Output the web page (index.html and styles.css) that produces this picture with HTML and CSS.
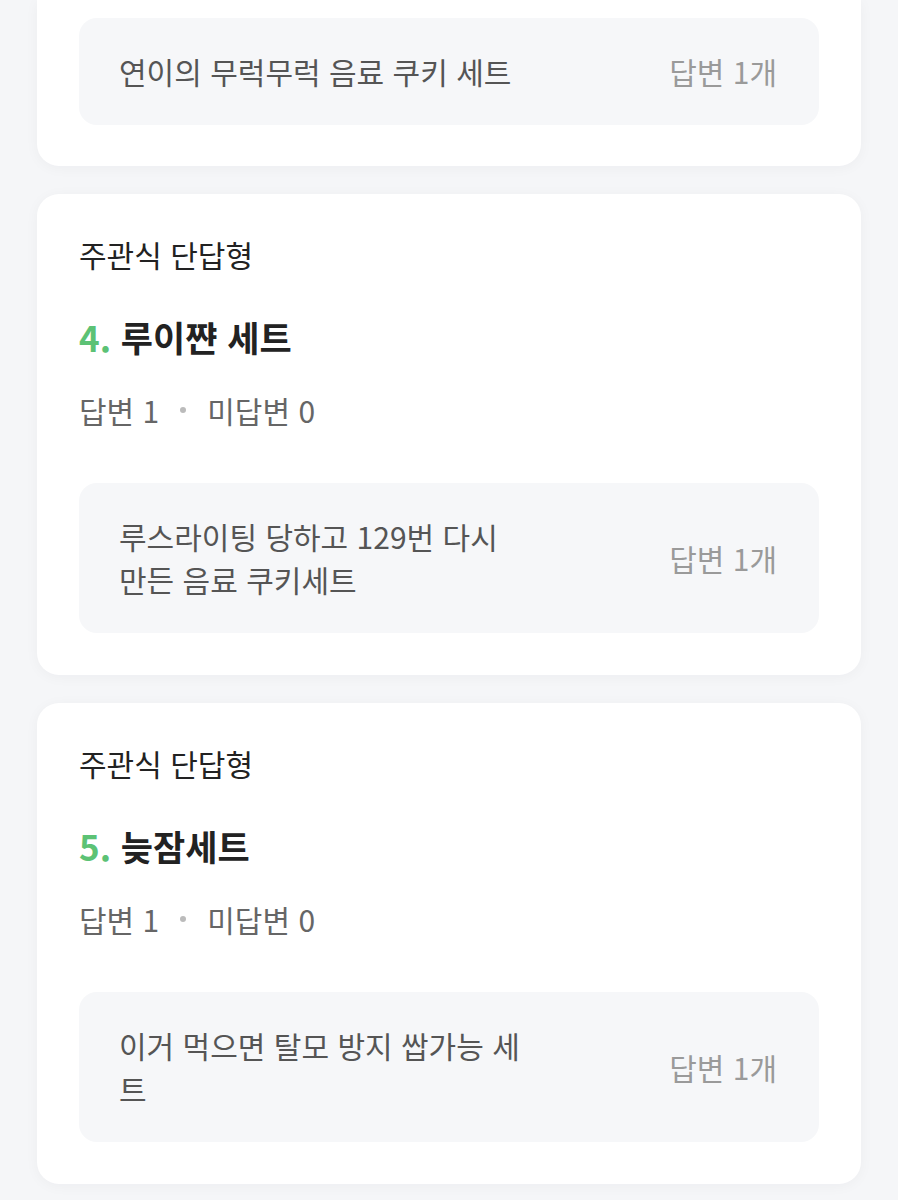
FILE: index.html
```html
<!DOCTYPE html>
<html lang="ko">
<head>
<meta charset="utf-8">
<link rel="stylesheet" href="styles.css">
</head>
<body>
<div class="page">
  <section class="card card-cut">
    <div class="answer">
      <p class="answer-text">연이의 무럭무럭 음료 쿠키 세트</p>
      <span class="answer-count">답변 1개</span>
    </div>
  </section>

  <section class="card">
    <div class="qtype">주관식 단답형</div>
    <h2 class="qtitle"><span class="qnum">4.</span> 루이쨘 세트</h2>
    <div class="stats"><span>답변 1</span><span class="dot"></span><span>미답변 0</span></div>
    <div class="answer">
      <p class="answer-text">루스라이팅 당하고 129번 다시 만든 음료 쿠키세트</p>
      <span class="answer-count">답변 1개</span>
    </div>
  </section>

  <section class="card">
    <div class="qtype">주관식 단답형</div>
    <h2 class="qtitle"><span class="qnum">5.</span> 늦잠세트</h2>
    <div class="stats"><span>답변 1</span><span class="dot"></span><span>미답변 0</span></div>
    <div class="answer">
      <p class="answer-text">이거 먹으면 탈모 방지 쌉가능 세트</p>
      <span class="answer-count">답변 1개</span>
    </div>
  </section>
</div>
</body>
</html>
```
FILE: styles.css
```css
* { box-sizing: border-box; }
html, body {
  margin: 0;
  padding: 0;
  background: #f5f6f8;
}
body {
  font-family: "Noto Sans CJK KR", "Noto Sans", sans-serif;
  color: #222;
}
.page {
  display: flex;
  flex-direction: column;
  gap: 28px;
  padding: 0 37px 40px;
}
.card {
  background: #fff;
  border-radius: 22px;
  padding: 38px 42px 42px;
  box-shadow: 0 2px 14px rgba(20, 30, 60, 0.04);
}
.card-cut {
  border-radius: 0 0 22px 22px;
  padding-top: 18px;
  padding-bottom: 41px;
}
.qtype {
  font-size: 30px;
  line-height: 44px;
  color: #222;
}
.qtitle {
  margin: 38px 0 0;
  font-size: 35px;
  line-height: 46px;
  font-weight: 700;
  color: #222;
}
.qnum {
  color: #5cc275;
}
.stats {
  margin-top: 30px;
  display: flex;
  align-items: center;
  gap: 21px;
  font-size: 30px;
  line-height: 40px;
  color: #666;
}
.dot {
  width: 6px;
  height: 6px;
  border-radius: 50%;
  background: #bbb;
}
.answer {
  margin-top: 53px;
  background: #f6f7f9;
  border-radius: 18px;
  padding: 32px 42px 32px 40px;
  display: flex;
  align-items: center;
  justify-content: space-between;
}
.card-cut .answer { margin-top: 0; }
.answer-text {
  margin: 0;
  width: 412px;
  font-size: 30px;
  line-height: 43px;
  color: #555;
  word-break: break-all;
}
.answer-count {
  font-size: 30px;
  line-height: 43px;
  color: #9a9a9a;
  white-space: nowrap;
}
```
